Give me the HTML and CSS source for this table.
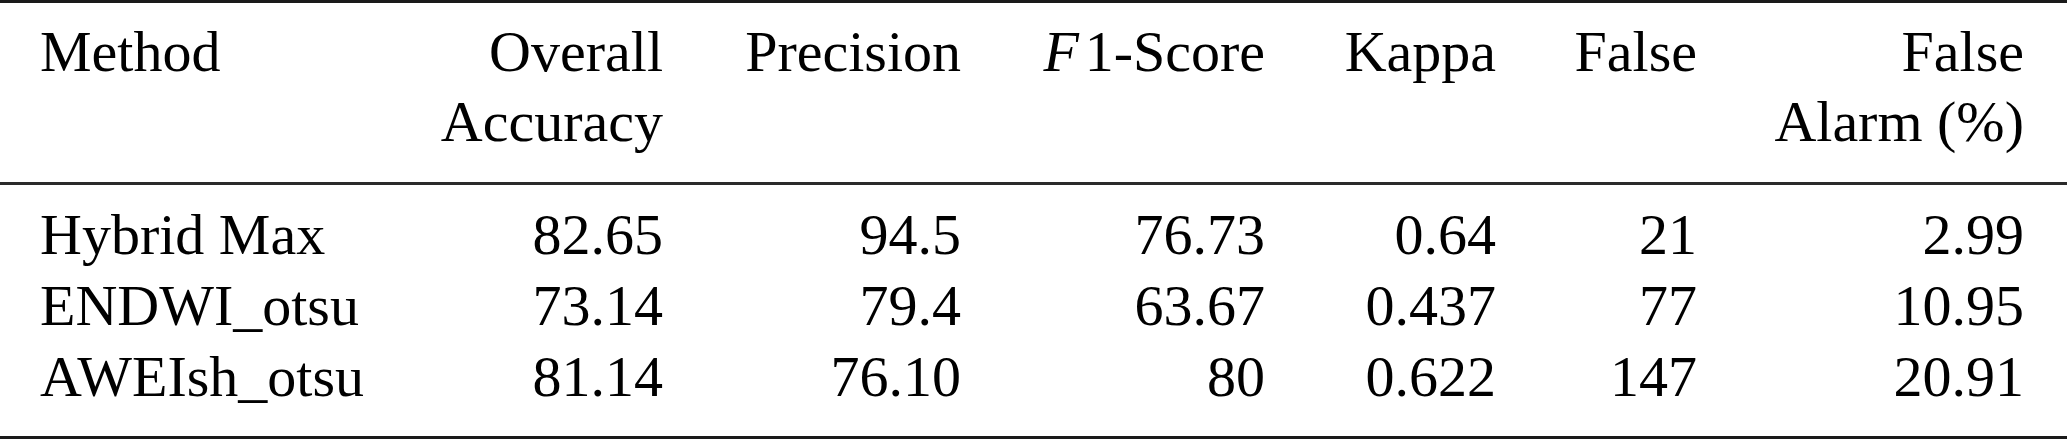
FILE: index.html
```html
<!DOCTYPE html>
<html lang="en">
<head>
<meta charset="utf-8">
<title>Method comparison</title>
<link rel="stylesheet" href="styles.css">
</head>
<body>
<table class="results">
  <colgroup>
    <col class="c-method">
    <col class="c-oa">
    <col class="c-prec">
    <col class="c-f1">
    <col class="c-kappa">
    <col class="c-false">
    <col class="c-fa">
  </colgroup>
  <thead>
    <tr>
      <th class="left">Method</th>
      <th>Overall<br>Accuracy</th>
      <th>Precision</th>
      <th><span class="math">F</span>1-Score</th>
      <th>Kappa</th>
      <th>False</th>
      <th class="last">False<br>Alarm (%)</th>
    </tr>
  </thead>
  <tbody>
    <tr class="first">
      <td class="left">Hybrid Max</td>
      <td>82.65</td>
      <td>94.5</td>
      <td>76.73</td>
      <td>0.64</td>
      <td>21</td>
      <td class="last">2.99</td>
    </tr>
    <tr>
      <td class="left">ENDWI_otsu</td>
      <td>73.14</td>
      <td>79.4</td>
      <td>63.67</td>
      <td>0.437</td>
      <td>77</td>
      <td class="last">10.95</td>
    </tr>
    <tr class="final">
      <td class="left">AWEIsh_otsu</td>
      <td>81.14</td>
      <td>76.10</td>
      <td>80</td>
      <td>0.622</td>
      <td>147</td>
      <td class="last">20.91</td>
    </tr>
  </tbody>
</table>
</body>
</html>
```

FILE: styles.css
```css
html, body {
  margin: 0;
  padding: 0;
  background: #ffffff;
}

body {
  font-family: "Liberation Serif", "Times New Roman", serif;
  font-size: 58px;
  color: #000000;
}

.results {
  width: 2067px;
  table-layout: fixed;
  border-collapse: separate;
  border-spacing: 0;
}

.c-method { width: 404px; }
.c-oa { width: 300px; }
.c-prec { width: 298px; }
.c-f1 { width: 304px; }
.c-kappa { width: 231px; }
.c-false { width: 201px; }
.c-fa { width: 329px; }

.results th,
.results td {
  font-weight: normal;
  text-align: right;
  white-space: nowrap;
  padding: 0 41px 0 20px;
  vertical-align: top;
}

.results th {
  line-height: 70px;
  padding-top: 14px;
  padding-bottom: 25px;
  border-top: 3px solid #1a1a1a;
  border-bottom: 3px solid #2a2a2a;
}

.results td {
  line-height: 71.2px;
}

.results .left {
  text-align: left;
  padding-left: 40px;
  padding-right: 0;
}

.results .last {
  padding-right: 43px;
}

.results tr.first td {
  padding-top: 14px;
}

.results tr.final td {
  padding-bottom: 23px;
  border-bottom: 3px solid #1a1a1a;
}

.math {
  font-style: italic;
  margin-right: 0.1em;
}
```
